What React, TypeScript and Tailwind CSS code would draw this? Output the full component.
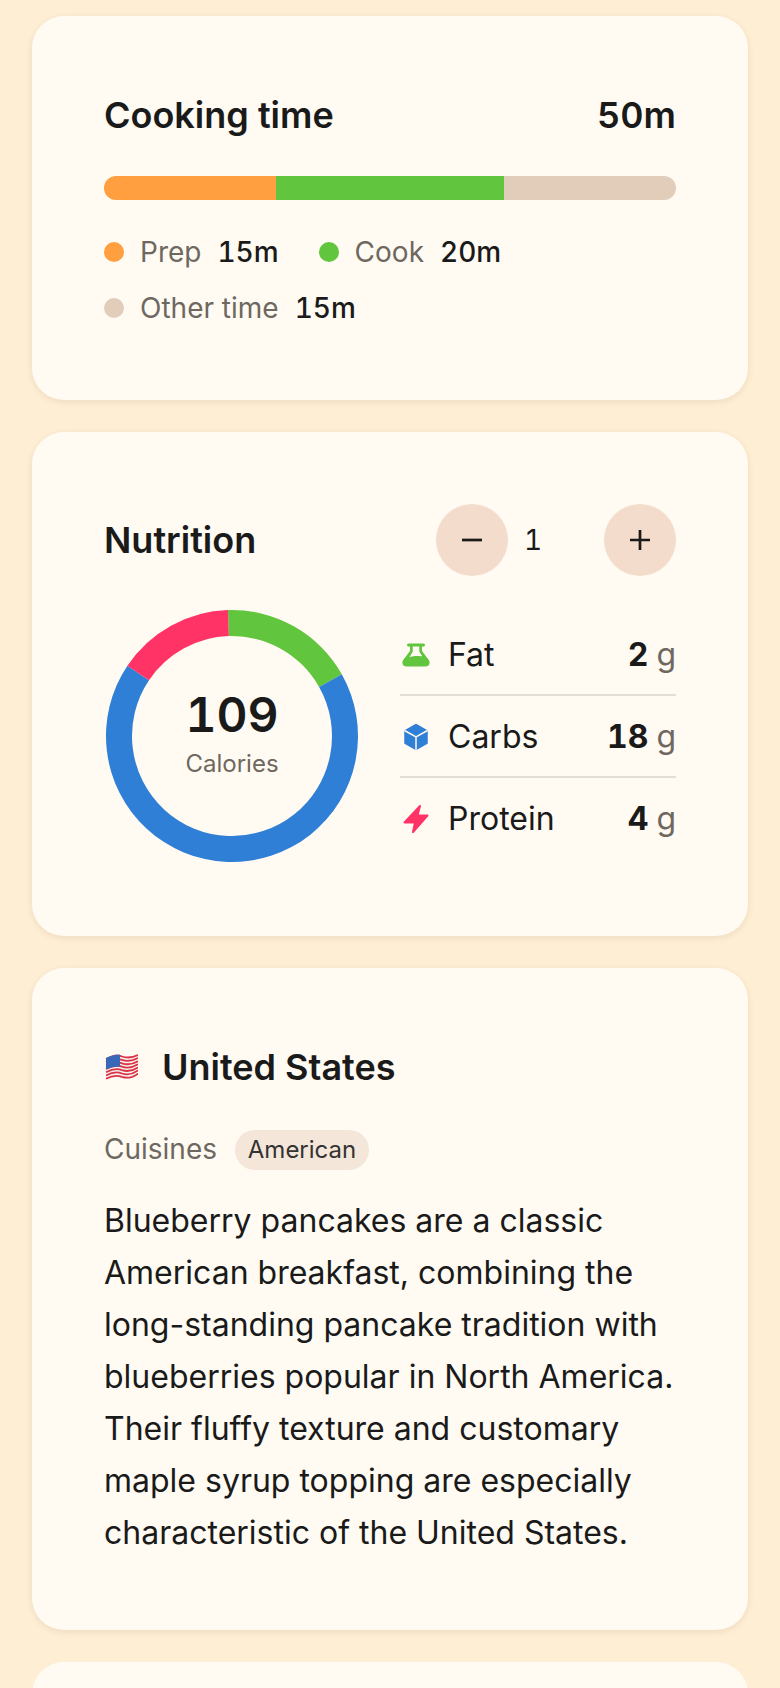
const font = { fontFamily: 'Inter, sans-serif' }

function polar(r: number, deg: number) {
  const a = ((deg - 90) * Math.PI) / 180
  return `${(130 + r * Math.cos(a)).toFixed(2)} ${(130 + r * Math.sin(a)).toFixed(2)}`
}

function arc(from: number, to: number) {
  const large = to - from > 180 ? 1 : 0
  return `M${polar(126, from)} A126 126 0 ${large} 1 ${polar(126, to)} L${polar(100, to)} A100 100 0 ${large} 0 ${polar(100, from)} Z`
}

function Flag() {
  const stripes = [0, 1, 2, 3, 4, 5, 6]
  return (
    <svg width="34" height="28" viewBox="0 0 34 28" className="shrink-0">
      <path d="M2 5 C9 1.500 13 .500 18 2.500 C24 4.500 29 3.500 34 1 V21 C29 24 24 26 18 25 C13 24 9 24 2 26 Z" fill="#f4f1f2" />
      {stripes.map((n) => (
        <path
          key={n}
          d={`M2 ${6 + n * 3.3} C9 ${2.500 + n * 3.250} 13 ${1.500 + n * 3.400} 18 ${3.500 + n * 3.400} C24 ${5.500 + n * 3.400} 29 ${4.500 + n * 3.300} 34 ${2 + n * 3.100}`}
          fill="none"
          stroke="#dc3443"
          strokeWidth="1.800"
        />
      ))}
      <path d="M2 5 C6 2.800 10 1.500 16 1.700 V13.500 C10 13.500 6 14.500 2 16.500 Z" fill="#3a68b8" />
    </svg>
  )
}

function FlaskIcon() {
  return (
    <svg width="28" height="24" viewBox="0 0 28 24">
      <path d="M6.500 0.500h15a1 1 0 0 1 0 3h-1.500v4.500l6.800 9c1.900 3 .4 6.500-3.600 6.500H4.800c-4 0-5.500-3.500-3.600-6.500L8 8V3.500H6.500a1 1 0 0 1 0-3Z" fill="#62c53e" />
      <path d="M10.700 3.500h6.600v5.300l2.800 4.200c-2.500 1-4.500-1-12.700 1.200l3.300-5.400Z" fill="#fffbf3" />
    </svg>
  )
}

function CubeIcon() {
  return (
    <svg width="26" height="28" viewBox="0 0 26 28">
      <path d="M13 2 23.500 8V20L13 26 2.500 20V8Z" fill="#2f7fd6" stroke="#2f7fd6" strokeWidth="2.500" strokeLinejoin="round" />
      <path d="M1.500 7.500 13 14 24.500 7.500M13 14V27.500" fill="none" stroke="#fffbf3" strokeWidth="1.500" />
    </svg>
  )
}

function BoltIcon() {
  return (
    <svg width="26" height="28" viewBox="0 0 26 28">
      <path d="M17 1 14.500 10.500H24.500L10 27 12 17.500H1.500Z" fill="#ff3366" stroke="#ff3366" strokeWidth="2" strokeLinejoin="round" />
    </svg>
  )
}

function Legend({ dot, label, value }: { dot: string; label: string; value: string }) {
  return (
    <div className="flex h-14 items-center">
      <span className={`mr-4 h-5 w-5 rounded-full ${dot}`} />
      <span className="mr-4 text-[28px] text-[#6e6860]">{label}</span>
      <span className="text-[28px] font-medium tabular-nums text-[#1a1a1a]">{value}</span>
    </div>
  )
}

const macros = [
  { label: 'Fat', value: '2', icon: <FlaskIcon /> },
  { label: 'Carbs', value: '18', icon: <CubeIcon /> },
  { label: 'Protein', value: '4', icon: <BoltIcon /> },
]

export default function App() {
  return (
    <div style={font} className="h-[1688px] overflow-hidden bg-[#feeed4] px-8 pt-4 text-[#1a1a1a]">
      <div className="flex flex-col gap-8">
        <section className="h-[384px] rounded-[32px] bg-[#fffbf3] px-[72px] pt-[72px] shadow-[0_2px_6px_rgba(120,90,50,0.12)]">
          <div className="flex h-[54px] items-center justify-between text-[36px] font-semibold">
            <h2>Cooking time</h2>
            <span className="tabular-nums">50m</span>
          </div>
          <div className="mt-[34px] flex h-6 overflow-hidden rounded-xl">
            <div className="w-[30%] bg-[#ff9f40]" />
            <div className="w-[40%] bg-[#62c53e]" />
            <div className="w-[30%] bg-[#e2cdba]" />
          </div>
          <div className="mt-6 flex flex-wrap gap-x-10">
            <Legend dot="bg-[#ff9f40]" label="Prep" value="15m" />
            <Legend dot="bg-[#62c53e]" label="Cook" value="20m" />
            <div className="basis-full" />
            <Legend dot="bg-[#e2cdba]" label="Other time" value="15m" />
          </div>
        </section>

        <section className="h-[504px] rounded-[32px] bg-[#fffbf3] px-[72px] pt-[72px] shadow-[0_2px_6px_rgba(120,90,50,0.12)]">
          <div className="flex h-[72px] items-center justify-between">
            <h2 className="text-[36px] font-semibold">Nutrition</h2>
            <div className="flex items-center">
              <button type="button" className="flex h-[72px] w-[72px] items-center justify-center rounded-full bg-[#f3dccb]">
                <svg width="24" height="24" viewBox="0 0 24 24" fill="none" stroke="#1a1a1a" strokeWidth="2.700"><path d="M2 12h20" /></svg>
              </button>
              <span className="w-24 pl-4 text-[28px] tabular-nums">1</span>
              <button type="button" className="flex h-[72px] w-[72px] items-center justify-center rounded-full bg-[#f3dccb]">
                <svg width="24" height="24" viewBox="0 0 24 24" fill="none" stroke="#1a1a1a" strokeWidth="2.700"><path d="M2 12h20M12 2v20" /></svg>
              </button>
            </div>
          </div>
          <div className="mt-8 flex items-center gap-10">
            <div className="relative h-64 w-64 shrink-0">
              <svg width="260" height="260" viewBox="0 0 260 260" className="absolute -left-0.5 -top-0.5">
                <path d={arc(-1.8, 60.6)} fill="#62c53e" />
                <path d={arc(60.6, 303.9)} fill="#2f7fd6" />
                <path d={arc(303.9, 358.2)} fill="#ff3366" />
              </svg>
              <div className="absolute inset-0 flex flex-col items-center justify-center pb-[5px]">
                <span className="text-[48px] font-semibold leading-[56px] tabular-nums">109</span>
                <span className="mt-[5px] text-2xl text-[#6e6860]">Calories</span>
              </div>
            </div>
            <div className="mt-0.5 flex-1">
              {macros.map((m, i) => (
                <div key={m.label} className={`flex h-[82px] items-center text-[32px] ${i < 2 ? 'border-b-2 border-[#e3ddd5] pt-0.5' : ''}`}>
                  <span className="flex w-8 justify-center">{m.icon}</span>
                  <span className="ml-4">{m.label}</span>
                  <span className="ml-auto font-bold tabular-nums">{m.value}</span>
                  <span className="ml-2 text-[#6e6860]">g</span>
                </div>
              ))}
            </div>
          </div>
        </section>

        <section className="h-[662px] rounded-[32px] bg-[#fffbf3] px-[72px] pt-[72px] shadow-[0_2px_6px_rgba(120,90,50,0.12)]">
          <div className="flex h-[54px] items-center gap-6">
            <Flag />
            <h2 className="text-[36px] font-semibold">United States</h2>
          </div>
          <div className="mt-9 flex h-10 items-center gap-[18px]">
            <span className="pb-0.5 text-[28px] text-[#6e6860]">Cuisines</span>
            <span className="flex h-10 w-[134px] items-center justify-center rounded-full bg-[#f5e6da] text-2xl text-[#333]">American</span>
          </div>
          <p className="mt-[25px] text-[32px] leading-[52px]">
            Blueberry pancakes are a classic American breakfast, combining the long-standing pancake tradition with blueberries popular in North America. Their fluffy texture and customary maple syrup topping are especially characteristic of the United States.
          </p>
        </section>

        <section className="h-[400px] rounded-[32px] bg-[#fffbf3]" />
      </div>
    </div>
  )
}
